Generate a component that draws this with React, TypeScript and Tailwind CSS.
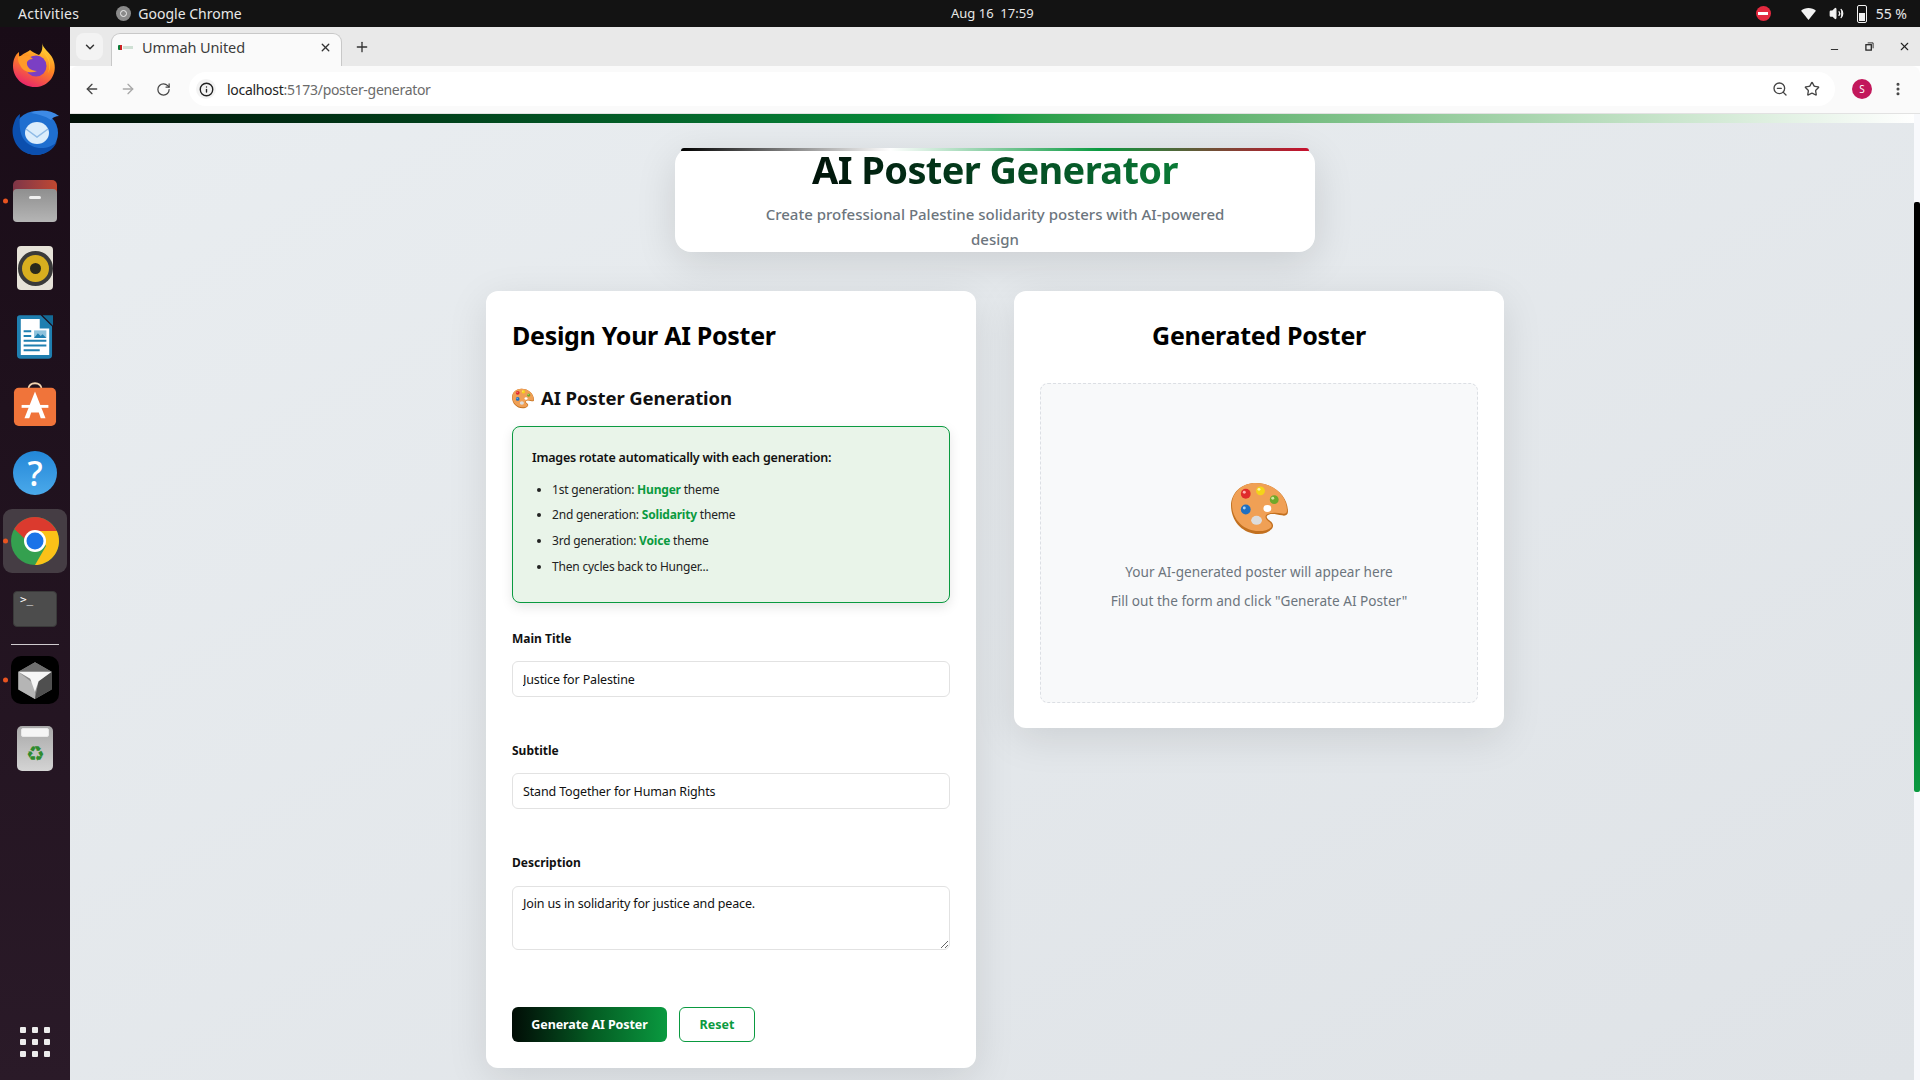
import React from 'react';
import {
  ArrowLeft, ArrowRight, ChevronDown, EllipsisVertical, Info, Minus, Plus, RotateCw, Star, Volume2, X, ZoomOut,
} from 'lucide-react';

const UI_FONT = "font-['Noto_Sans',sans-serif]";

const Firefox = () => (
  <svg viewBox="0 0 44 44" className="h-[44px] w-[44px]">
    <defs>
      <linearGradient id="ff" x1="0.75" y1="0" x2="0.3" y2="1">
        <stop offset="0" stopColor="#ffe03a" />
        <stop offset="0.45" stopColor="#ff8a20" />
        <stop offset="1" stopColor="#e9216e" />
      </linearGradient>
    </defs>
    <path d="M29 0c1 6 8 9 11 16 6 14-4 28-18 28C9 44 0 34 0 23 0 17 2 12 6 9c0 3 0 5 1 6 2-5 7-5 10-8 2 2 5 3 9 5 3-3 4-7 3-12z" fill="url(#ff)" />
    <circle cx="23" cy="23" r="10.5" fill="#7b3fc4" />
    <path d="M5 14c5-3 11-2 15 2-3 0-5 1-6 3-1 5 4 9 10 9-6 3-14 1-17-6-2-3-2-5-2-8z" fill="#ff9a2a" />
    <path d="M29 8c5 3 8 8 8 15 0 3-1 5-2 7 4-10-1-17-6-22z" fill="#ffc52e" />
  </svg>
);

const Thunderbird = () => (
  <svg viewBox="0 0 48 46" className="h-[46px] w-[48px]">
    <circle cx="25" cy="24" r="22" fill="#1f6fd0" />
    <path d="M3 14C-2 27 6 46 25 46c9 0 17-5 21-13-6 6-17 8-25 4C12 33 7 25 9 5 6 7 4 10 3 14z" fill="#0b4fae" />
    <path d="M20 4c8-4 20-3 28 3-3 0-6 1-8 4-6-4-13-6-20-7z" fill="#3d8ae6" />
    <ellipse cx="26" cy="24" rx="12" ry="11" fill="#dcedfb" />
    <path d="M15 20l11 8 11-8" fill="none" stroke="#8fbbe6" strokeWidth="1.5" />
  </svg>
);

const Files = () => (
  <div className="relative h-[42px] w-[44px]">
    <div className="absolute left-0 top-0 h-[20px] w-full rounded-t-[5px] bg-gradient-to-r from-[#7e3547] to-[#c0482f]" />
    <div className="absolute bottom-0 left-0 h-[33px] w-full rounded-[4px] bg-gradient-to-b from-[#8f8f8f] to-[#b5b5b5]" />
    <div className="absolute left-[16px] top-[16px] h-[3px] w-[12px] rounded-full bg-[#f0f0f0]" />
  </div>
);

const Rhythmbox = () => (
  <div className="flex h-[44px] w-[36px] items-center justify-center rounded-[4px] bg-[#e6e2d8]">
    <div className="flex h-[27px] w-[27px] items-center justify-center rounded-full bg-[#d8ae1f] ring-[4px] ring-[#3a3a3a]">
      <div className="h-[11px] w-[11px] rounded-full bg-[#2a2a1c]" />
    </div>
  </div>
);

const Writer = () => (
  <svg viewBox="0 0 38 46" className="h-[44px] w-[36px]">
    <path d="M3 0h22l12 12v30a4 4 0 0 1-4 4H4a4 4 0 0 1-4-4V3a3 3 0 0 1 3-3z" fill="#1f7fb0" />
    <path d="M4 4h20v10h10v28H4z" fill="#fff" />
    <path d="M27 0l11 11V0z" fill="#136a96" />
    <path d="M7 16h8v2H7zM7 21h8v2H7zM7 26h24v2H7zM7 31h24v2H7zM7 36h17v2H7z" fill="#1f7fb0" />
    <path d="M18 16h13v8H18z" fill="#8ec2dc" />
    <path d="M18 24l4-5 3 3 2-2 4 4z" fill="#1f7fb0" />
  </svg>
);

const Software = () => (
  <svg viewBox="0 0 44 46" className="h-[44px] w-[44px]">
    <path d="M15 8c0-9 14-9 14 0" fill="none" stroke="#f3d4b0" strokeWidth="2" />
    <rect x="0" y="6" width="44" height="40" rx="5" fill="#f0743a" />
    <path d="M22 10l-11 28h5l2-6h8l2 6h5L22 10z" fill="#fff" />
    <path d="M8 24h28v3H8z" fill="#fff" />
  </svg>
);

const Help = () => (
  <div className="flex h-[44px] w-[44px] items-center justify-center rounded-full bg-gradient-to-b from-[#2287d8] to-[#4aa9ea] text-[34px] font-medium leading-none text-white">
    ?
  </div>
);

const Chrome = () => (
  <svg viewBox="0 0 48 48" className="h-[48px] w-[48px]">
    <circle cx="24" cy="24" r="24" fill="#34a04f" />
    <path d="M24 14h21.8c1.400 3 2.200 6.300 2.200 10 0 13.300-10.700 24-24 24l11-19z" fill="#fbc118" />
    <path d="M3.300 12C7.500 4.800 15.200 0 24 0c9 0 17 5 21.800 14H24c-5 0-9 3.500-10 8z" fill="#db3a2e" />
    <circle cx="24" cy="24" r="11" fill="#fff" />
    <circle cx="24" cy="24" r="8.500" fill="#1a73e8" />
  </svg>
);

const Terminal = () => (
  <div className="h-[36px] w-[44px] rounded-[4px] border border-[#3a3a3a] bg-[#4c4c4c] pl-[6px] pt-[1px] font-['DejaVu_Sans_Mono',monospace] text-[11px] leading-[14px] text-white">
    &gt;_
  </div>
);

const Cube = () => (
  <div className="flex h-[48px] w-[48px] items-center justify-center rounded-[10px] bg-black">
    <svg viewBox="0 0 32 32" className="h-[38px] w-[38px]">
      <path d="M16 1l14 8v15l-14 8-14-8V9z" fill="#8a8a8a" />
      <path d="M2 9l14-8 14 8z" fill="#6e6e6e" />
      <path d="M2 9l14 11v12L2 24z" fill="#b5b5b5" />
      <path d="M30 9v15l-14 8 3-15z" fill="#4f4f4f" />
      <path d="M2 9l28 0-11 8-3 9-4-11z" fill="#f6f6f6" />
    </svg>
  </div>
);

const Trash = () => (
  <div className="flex h-[45px] w-[36px] flex-col items-center rounded-[5px] bg-gradient-to-b from-[#a9a9a9] to-[#d4d4d4]">
    <div className="mt-[2px] h-[9px] w-[28px] rounded-[2px] border border-[#e8e8e8] bg-[#f5f5f5]" />
    <div className="mt-[3px] text-[21px] leading-[26px] text-[#2e8b2e]">♻</div>
  </div>
);

const DockItem = ({ h, dot, active, children }: { h: string; dot?: boolean; active?: boolean; children: React.ReactNode }) => (
  <div className={`relative flex w-full shrink-0 items-center justify-center ${h}`}>
    {active && <div className="absolute inset-x-[3px] inset-y-0 rounded-[9px] bg-[#453d44]" />}
    {dot && <div className="absolute left-[3px] top-1/2 h-[5px] w-[5px] -translate-y-1/2 rounded-full bg-[#e95420]" />}
    <div className="relative flex items-center justify-center">{children}</div>
  </div>
);

const Dock = () => (
  <div className="flex w-[70px] shrink-0 flex-col bg-gradient-to-b from-[#190c17] to-[#2a1a28] pt-[5px]">
    <DockItem h="h-[66px]"><Firefox /></DockItem>
    <DockItem h="h-[68px]"><Thunderbird /></DockItem>
    <DockItem h="h-[70px]" dot><Files /></DockItem>
    <DockItem h="h-[64px]"><Rhythmbox /></DockItem>
    <DockItem h="h-[74px]"><Writer /></DockItem>
    <DockItem h="h-[60px] mb-[3px]"><Software /></DockItem>
    <DockItem h="h-[72px]"><Help /></DockItem>
    <DockItem h="h-[64px]" dot active><Chrome /></DockItem>
    <DockItem h="h-[71px]"><Terminal /></DockItem>
    <div className="mx-[11px] h-px shrink-0 bg-[#cfcbce]" />
    <DockItem h="h-[70px]" dot><Cube /></DockItem>
    <DockItem h="h-[66px]"><Trash /></DockItem>
    <div className="mb-[23px] mt-auto grid w-[30px] grid-cols-3 gap-[6px] self-center">
      {Array.from({ length: 9 }).map((_, i) => (
        <div key={i} className="h-[6px] w-[6px] rounded-[1px] bg-[#ececec]" />
      ))}
    </div>
  </div>
);

const TopBar = () => (
  <div className={`relative flex h-[27px] shrink-0 items-center bg-[#131313] text-[14px] text-[#e8e8e8] ${UI_FONT}`}>
    <span className="ml-[18px] tracking-[0.3px]">Activities</span>
    <span className="ml-[37px] flex h-[15px] w-[15px] items-center justify-center rounded-full bg-[#8a8a8a]">
      <span className="h-[7px] w-[7px] rounded-full border border-[#eee]" />
    </span>
    <span className="ml-[7px]">Google Chrome</span>
    <span className="absolute left-[951px] top-[4px] text-[13px] leading-[18px]">Aug 16&nbsp; 17:59</span>
    <div className="ml-auto flex items-center">
      <span className="flex h-[15px] w-[15px] items-center justify-center rounded-full bg-[#e3293f]">
        <span className="h-[3px] w-[10px] bg-white" />
      </span>
      <svg viewBox="0 0 16 14" className="ml-[30px] h-[13px] w-[15px]">
        <path d="M0 4c4-4 12-4 16 0l-8 10z" fill="#f2f2f2" />
      </svg>
      <Volume2 size={15} className="ml-[13px] fill-[#f2f2f2] text-[#f2f2f2]" />
      <div className="ml-[13px] flex h-[18px] w-[10px] items-end rounded-[2px] border border-[#f2f2f2] p-px">
        <div className="h-[8px] w-full bg-[#f2f2f2]" />
      </div>
      <span className="ml-[9px] mr-[13px]">55 %</span>
    </div>
  </div>
);

const BrowserChrome = () => (
  <div className={`shrink-0 ${UI_FONT}`}>
    <div className="flex h-[39px] items-end bg-[#e9e9e9]">
      <div className="mb-[6px] ml-[6px] flex h-[27px] w-[27px] items-center justify-center rounded-[8px] bg-[#f3f3f3]">
        <ChevronDown size={14} strokeWidth={2.5} className="text-[#333]" />
      </div>
      <div className="ml-[8px] flex h-[33px] w-[231px] items-center rounded-t-[9px] border border-b-0 border-[#c8c8c8] bg-[#fafafa] pb-[5px] pl-[6px] pr-[9px]">
        <div className="flex h-[5px] w-[15px] items-center overflow-hidden rounded-[1px]">
          <div className="h-full w-[2px] bg-[#0a7a36]" />
          <div className="h-full w-[2px] bg-[#c22]" />
          <div className="ml-px h-[3px] flex-1 bg-[#cfe0d4]" />
        </div>
        <span className="ml-[9px] text-[14.5px] tracking-[-0.1px] text-[#3c3c3c]">Ummah United</span>
        <X size={13} strokeWidth={2.5} className="ml-auto text-[#333]" />
      </div>
      <Plus size={16} strokeWidth={2} className="mb-[11px] ml-[12px] text-[#333]" />
      <div className="mb-[11px] ml-auto flex items-center text-[#222]">
        <Minus size={11} strokeWidth={2} className="mt-[6px]" />
        <svg viewBox="0 0 10 10" className="ml-[25px] h-[9px] w-[9px]" fill="none" stroke="#222" strokeWidth="1">
          <rect x="1" y="3" width="6" height="6" strokeWidth="1.4" />
          <path d="M3 1h6v6" />
        </svg>
        <X size={13} strokeWidth={2} className="ml-[24px] mr-[9px]" />
      </div>
    </div>
    <div className="flex h-[48px] items-center rounded-t-[8px] border-b border-[#e2e2e2] bg-[#fafafa] pb-px">
      <ArrowLeft size={16} strokeWidth={2} className="ml-[14px] text-[#454545]" />
      <ArrowRight size={16} strokeWidth={2} className="ml-[20px] text-[#a8a8a8]" />
      <RotateCw size={15} strokeWidth={2} className="ml-[20px] text-[#454545]" />
      <div className="ml-[18px] flex h-[34px] flex-1 items-center rounded-full bg-white pl-[7px] pr-[15px]">
        <span className="flex h-[20px] w-[20px] items-center justify-center rounded-full bg-[#f3f3f3]">
          <Info size={15} strokeWidth={2.2} className="text-[#222]" />
        </span>
        <span className="ml-[11px] text-[14px] tracking-[-0.3px] text-[#1f1f1f]">localhost<span className="text-[#6b6b6b]">:5173/poster-generator</span></span>
        <ZoomOut size={16} strokeWidth={2} className="ml-auto text-[#454545]" />
        <Star size={16} strokeWidth={2} className="ml-[16px] text-[#454545]" />
      </div>
      <div className="ml-[17px] flex h-[20px] w-[20px] items-center justify-center rounded-full bg-[#c2185b] text-[10px] text-white">S</div>
      <EllipsisVertical size={16} strokeWidth={2.6} className="ml-[18px] mr-[14px] text-[#454545]" />
    </div>
  </div>
);

const PaletteEmoji = ({ size }: { size: string }) => (
  <svg viewBox="0 0 58 54" className={size}>
    <path d="M25 1C11 1 0 11 0 24c0 16 12 29 28 29 6 0 11-2 14-6 2-3 0-6-3-8-3-2-4-5 0-6 3-1 8 0 13 1 4 1 6-1 6-4C58 14 43 1 25 1z" fill="#c2701f" />
    <path d="M25 1C12 1 1 10 1 23c0 15 12 27 27 27 6 0 10-1 13-4 1-2 0-4-3-6-4-3-4-7 1-8 3-1 8-1 13 0 4 1 5-1 5-3C57 13 42 1 25 1z" fill="#f0a055" />
    <circle cx="15" cy="12" r="5" fill="#e02b2b" />
    <circle cx="30" cy="9" r="4.500" fill="#f4d418" />
    <circle cx="44" cy="18" r="4.500" fill="#6fa82a" />
    <circle cx="15" cy="28" r="5" fill="#1f6fc0" />
    <circle cx="13.500" cy="10.500" r="1.500" fill="#ffb0b0" />
    <circle cx="28.500" cy="7.500" r="1.500" fill="#fff3a8" />
    <circle cx="42.500" cy="16.500" r="1.500" fill="#cfe89c" />
    <circle cx="13.500" cy="26.500" r="1.500" fill="#a8d0f5" />
    <ellipse cx="37" cy="27" rx="4" ry="3.500" fill="#fff" />
    <ellipse cx="26" cy="39" rx="5.500" ry="4.500" fill="#dcdcdc" />
  </svg>
);

const labelClass = 'mb-[13px] block text-[12px] font-bold leading-[18px] text-[#111]';

const Field = ({ label, value, className }: { label: string; value: string; className: string }) => (
  <div className={className}>
    <label className={labelClass}>{label}</label>
    <input
      readOnly
      value={value}
      className="block h-[36px] w-full rounded-[6px] border border-[#e2e2e2] bg-white px-[10px] text-[12.5px] tracking-[-0.15px] text-[#111] outline-none"
    />
  </div>
);

const PosterForm = () => (
  <div className="w-[490px] rounded-[12px] bg-white px-[26px] pb-[26px] pt-[26px] shadow-[0_10px_40px_rgba(0,0,0,0.1)]">
    <h2 className="text-[25px] font-bold leading-[36px] tracking-[-0.3px] text-black">Design Your AI Poster</h2>
    <h3 className="mt-[32px] flex items-center text-[18.5px] font-bold leading-[26px] tracking-[-0.1px] text-[#111]">
      <PaletteEmoji size="mr-[7px] h-[21px] w-[22px]" />
      AI Poster Generation
    </h3>
    <div className="mt-[15px] h-[177px] rounded-[8px] border border-[#0a9a40] bg-[#e9f4e9] pl-[19px] pt-[22px] text-[12px] tracking-[-0.2px] text-[#222] shadow-[0_4px_12px_rgba(0,0,0,0.1)]">
      <p className="text-[12.5px] font-semibold leading-[18px] tracking-[-0.2px] text-[#111]">Images rotate automatically with each generation:</p>
      <ul className="mt-[10px] list-disc pl-[20px] leading-[18px]">
        <li className="py-[3.83px]">1st generation: <strong className="text-[#0a9a40]">Hunger</strong> theme</li>
        <li className="py-[3.83px]">2nd generation: <strong className="text-[#0a9a40]">Solidarity</strong> theme</li>
        <li className="py-[3.83px]">3rd generation: <strong className="text-[#0a9a40]">Voice</strong> theme</li>
        <li className="py-[3.83px]">Then cycles back to Hunger...</li>
      </ul>
    </div>
    <Field label="Main Title" value="Justice for Palestine" className="mt-[27px]" />
    <Field label="Subtitle" value="Stand Together for Human Rights" className="mt-[45px]" />
    <div className="mt-[45px]">
      <label className="mb-[14px] block text-[12px] font-bold leading-[18px] text-[#111]">Description</label>
      <textarea
        readOnly
        value="Join us in solidarity for justice and peace."
        className="block h-[64px] w-full rounded-[6px] border border-[#e2e2e2] bg-white px-[10px] py-[8px] text-[12.5px] leading-[17px] tracking-[-0.15px] text-[#111] outline-none"
      />
    </div>
    <div className="mt-[57px] flex gap-[12px]">
      <button className="h-[35px] w-[155px] rounded-[6px] bg-gradient-to-r from-[#010d06] via-[#045a22] to-[#0a9a40] pt-[2px] text-[12.5px] font-bold tracking-[-0.1px] text-white">Generate AI Poster</button>
      <button className="h-[35px] w-[76px] rounded-[6px] border border-[#0a9a40] bg-white pt-[2px] text-[12.5px] font-bold text-[#0a9a40]">Reset</button>
    </div>
  </div>
);

const PosterPreview = () => (
  <div className="w-[490px] rounded-[12px] bg-white px-[26px] pb-[25px] pt-[26px] shadow-[0_10px_40px_rgba(0,0,0,0.1)]">
    <h2 className="text-center text-[25px] font-bold leading-[36px] tracking-[-0.3px] text-black">Generated Poster</h2>
    <div className="mt-[30px] flex h-[320px] flex-col items-center rounded-[8px] border border-dashed border-[#dcdfe4] bg-[#f8f9fa] pt-[98px]">
      <PaletteEmoji size="h-[53px] w-[57px]" />
      <p className="mt-[27px] text-[13.6px] leading-[20px] text-[#6c757d]">Your AI-generated poster will appear here</p>
      <p className="mt-[9px] text-[13.6px] leading-[20px] text-[#6c757d]">Fill out the form and click "Generate AI Poster"</p>
    </div>
  </div>
);

export default function App() {
  return (
    <div className={`flex h-[1080px] w-[1920px] flex-col overflow-hidden ${UI_FONT}`}>
      <TopBar />
      <div className="flex min-h-0 flex-1">
        <Dock />
        <div className="flex min-w-0 flex-1 flex-col">
          <BrowserChrome />
          <div className="relative min-h-0 flex-1 overflow-hidden bg-gradient-to-br from-[#e9edf0] to-[#dfe3e7]">
            <div className="mr-[6px] h-[9px] bg-gradient-to-r from-[#000f06] via-[#0a9a40] to-[#ffffff]" />
            <div className="flex flex-col items-center">
              <div className="mt-[25px] h-[104px] w-[640px] rounded-[16px] bg-white text-center shadow-[0_10px_40px_rgba(0,0,0,0.12)]">
                <div className="mx-[6px] h-[3px] rounded-t-[3px] bg-[linear-gradient(to_right,#000,#fff,#0a9a40,#c8102e)]" />
                <h1 className="mx-auto w-fit bg-gradient-to-r from-[#01140a] to-[#0a7a36] bg-clip-text text-[38px] font-bold leading-[36px] tracking-[-0.6px] text-transparent">AI Poster Generator</h1>
                <p className="mx-auto mt-[15px] w-[480px] text-[15px] font-medium leading-[25px] text-[#6c757d]">Create professional Palestine solidarity posters with AI-powered design</p>
              </div>
              <div className="mt-[39px] flex items-start gap-[38px]">
                <PosterForm />
                <PosterPreview />
              </div>
            </div>
            <div className="absolute inset-y-0 right-0 w-[6px] bg-[#f8f9fc]">
              <div className="mt-[88px] h-[590px] rounded-[2px] bg-gradient-to-b from-[#000] to-[#0a9a40]" />
            </div>
          </div>
        </div>
      </div>
    </div>
  );
}
